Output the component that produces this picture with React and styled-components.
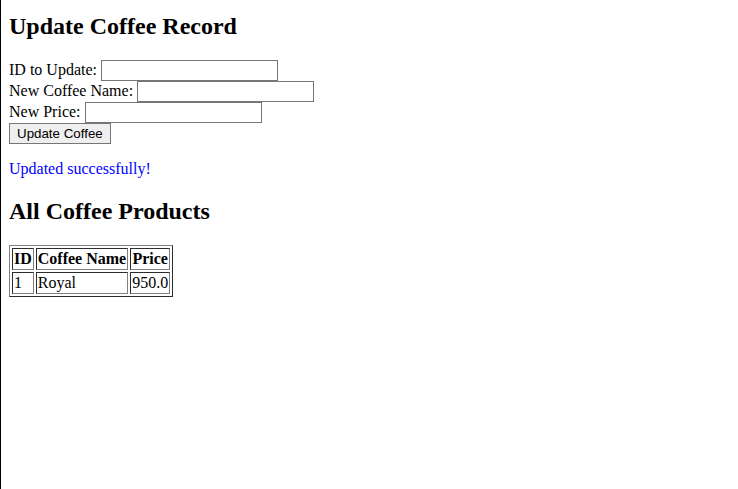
import React from "react";
import styled, { createGlobalStyle } from "styled-components";

const Global = createGlobalStyle`
  html {
    height: 100%;
    border-left: 1px solid #000;
    box-sizing: border-box;
  }
  body {
    margin: 8px;
    display: flow-root;
    font-family: "Liberation Serif", "Times New Roman", serif;
    font-size: 16px;
    color: #000;
    background: #fff;
  }
`;

const Heading = styled.h2`
  font-size: 1.5em;
  font-weight: bold;
  margin: ${(p) => (p.$first ? "5px" : "0.83em")} 0 0.83em;
`;

const Form = styled.form`
  margin: 0;
`;

const Label = styled.label``;

const TextInput = styled.input`
  font-family: "Liberation Sans", Arial, sans-serif;
  font-size: 13.333px;
  width: 177px;
  height: 21px;
  box-sizing: border-box;
  padding: 1px 2px;
  border: 1px solid #767676;
  margin: 0;
  background: #fff;
`;

const Button = styled.button`
  font-family: "Liberation Sans", Arial, sans-serif;
  font-size: 13.333px;
  padding: 1px 7px;
  border: 1px solid #767676;
  border-radius: 0;
  background: #efefef;
  color: #000;
  margin: 0;
  height: 21px;
`;

const Message = styled.p`
  color: blue;
  margin: 16px 0;
`;

const Table = styled.table`
  border: 1px outset #808080;
  border-spacing: 2px;
  border-collapse: separate;
`;

const Th = styled.th`
  border: 1px inset #808080;
  padding: 1px;
  font-weight: bold;
  text-align: center;
`;

const Td = styled.td`
  border: 1px inset #808080;
  padding: 1px;
`;

export default function App() {
  return (
    <>
      <Global />
      <Heading $first>Update Coffee Record</Heading>
      <Form onSubmit={(e) => e.preventDefault()}>
        <Label>ID to Update: </Label>
        <TextInput type="text" />
        <br />
        <Label>New Coffee Name: </Label>
        <TextInput type="text" />
        <br />
        <Label>New Price: </Label>
        <TextInput type="text" />
        <br />
        <Button type="submit">Update Coffee</Button>
      </Form>
      <Message>Updated successfully!</Message>
      <Heading>All Coffee Products</Heading>
      <Table>
        <tbody>
          <tr>
            <Th>ID</Th>
            <Th>Coffee Name</Th>
            <Th>Price</Th>
          </tr>
          <tr>
            <Td>1</Td>
            <Td>Royal</Td>
            <Td>950.0</Td>
          </tr>
        </tbody>
      </Table>
    </>
  );
}
